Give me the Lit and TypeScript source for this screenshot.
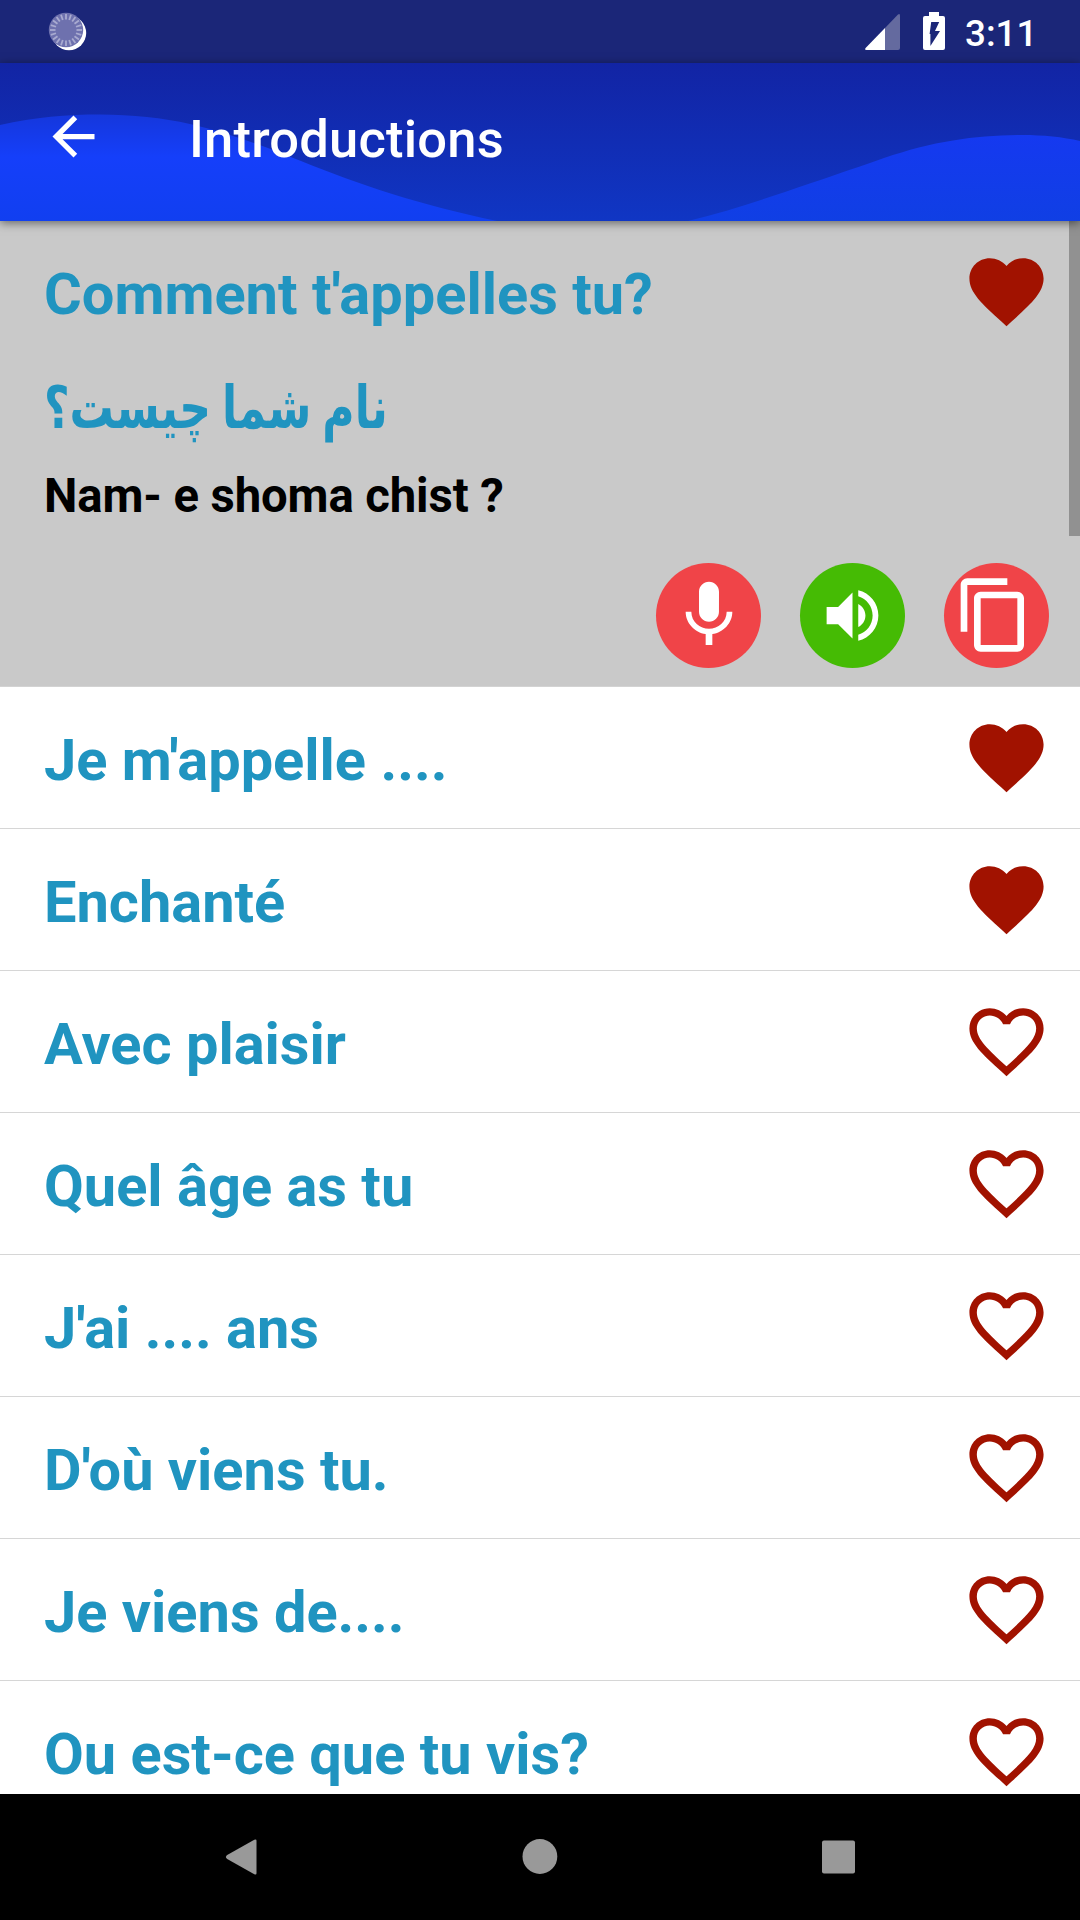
import { LitElement, html, css, svg } from "lit";
import { customElement, property } from "lit/decorators.js";

interface Phrase {
  text: string;
  liked: boolean;
}

const PHRASES: Phrase[] = [
  { text: "Je m'appelle ....", liked: true },
  { text: "Enchanté", liked: true },
  { text: "Avec plaisir", liked: false },
  { text: "Quel âge as tu", liked: false },
  { text: "J'ai .... ans", liked: false },
  { text: "D'où viens tu.", liked: false },
  { text: "Je viens de....", liked: false },
  { text: "Ou est-ce que tu vis?", liked: false },
];

const HEART =
  "M12 21.35l-1.45-1.32C5.4 15.36 2 12.28 2 8.5 2 5.42 4.42 3 7.5 3c1.74 0 3.41.81 4.5 2.09C13.09 3.81 14.76 3 16.5 3 19.58 3 22 5.42 22 8.5c0 3.78-3.4 6.86-8.55 11.54L12 21.35z";
const HEART_HOLE =
  "M12.1 18.6l-.1.1-.1-.1C7.14 14.24 4 11.39 4 8.5 4 6.5 5.5 5 7.5 5c1.54 0 3.04.99 3.57 2.36h1.87C13.46 5.99 14.96 5 16.5 5c2 0 3.5 1.5 3.5 3.5 0 2.89-3.14 5.74-7.9 10.1z";

@customElement("heart-icon")
export class HeartIcon extends LitElement {
  @property({ type: Boolean }) filled = false;

  static styles = css`
    :host { display: block; flex: none; width: 89px; height: 89px; }
    .heart { display: block; width: 89px; height: 89px; fill: #a11200; }
  `;

  render() {
    return html`<svg class="heart" viewBox="0 0 24 24">
      <path fill-rule="evenodd" d=${this.filled ? HEART : HEART + HEART_HOLE}></path>
    </svg>`;
  }
}

@customElement("status-bar")
export class StatusBar extends LitElement {
  static styles = css`
    :host {
      display: flex; align-items: flex-start; height: 63px; box-sizing: border-box;
      padding: 0 44px 0 48px; background: #1b2678; color: #fff;
      font-family: Roboto, sans-serif;
    }
    .sync { width: 40px; height: 40px; margin-top: 12px; }
    .signal { width: 35px; height: 36px; margin: 14px 0 0 auto; }
    .battery { width: 22px; height: 38px; margin: 12px 0 0 23px; }
    .time {
      margin-left: 20px; margin-top: 12px; font-size: 36.75px; line-height: 43px;
      font-weight: 500; width: 71px; white-space: nowrap;
    }
  `;

  render() {
    const ticks = Array.from({ length: 20 }, (_, i) => i * 18);
    return html`
      <svg class="sync" viewBox="0 0 40 40">
        <circle cx="21" cy="21" r="17.2" fill="#fff"></circle>
        <circle cx="18" cy="18" r="17.2" fill="#6e71ae"></circle>
        ${ticks.map(
          (a) => svg`<line x1="18" y1="2" x2="18" y2="7.5" stroke="#a9abd0" stroke-width="1.8" transform="rotate(${a} 18 18)"></line>`
        )}
      </svg>
      <svg class="signal" viewBox="0 0 35 36">
        <path d="M33 .6Q35-.8 35 1.6V34q0 2-2 2H20V14z" fill="#646a9f"></path>
        <path d="M20 14V36H1.6Q-.8 36 .6 34z" fill="#fff"></path>
      </svg>
      <svg class="battery" viewBox="0 0 22 38">
        <path d="M6 0h10v4h4q2 0 2 2v30q0 2-2 2H2q-2 0-2-2V6q0-2 2-2h4z" fill="#fff"></path>
        <path d="M8.200 10h8l-4.200 9H17L7.400 34V22H6.600z" fill="#1b2678"></path>
      </svg>
      <span class="time">3:11</span>
    `;
  }
}

@customElement("title-bar")
export class TitleBar extends LitElement {
  static styles = css`
    :host {
      display: grid; height: 158px; position: relative; z-index: 1;
      box-shadow: 0 2px 9px rgba(0, 0, 0, 0.5); font-family: Roboto, sans-serif;
    }
    .waves, .content { grid-area: 1 / 1; }
    .waves { display: block; width: 1080px; height: 158px; }
    .content { display: flex; align-items: center; padding: 0 42px; color: #fff; }
    .back { width: 63px; height: 63px; margin-top: -11px; fill: #fff; }
    .title { margin: -6px 0 0 84px; font-size: 52.5px; line-height: 62px; font-weight: 500; letter-spacing: 0.2px; }
  `;

  render() {
    return html`
      <svg class="waves" viewBox="0 63 1080 158" preserveAspectRatio="none">
        <defs>
          <linearGradient id="sky" x1="0" y1="0" x2="0" y2="1">
            <stop offset="0" stop-color="#1224a4"></stop>
            <stop offset="1" stop-color="#1036c4"></stop>
          </linearGradient>
          <linearGradient id="left" x1="0" y1="0" x2="0" y2="1">
            <stop offset="0" stop-color="#1537dc"></stop>
            <stop offset=".4" stop-color="#153ffa"></stop>
            <stop offset="1" stop-color="#113ff0"></stop>
          </linearGradient>
          <linearGradient id="right" x1="0" y1="0" x2="0" y2="1">
            <stop offset="0" stop-color="#1539f0"></stop>
            <stop offset="1" stop-color="#103fe4"></stop>
          </linearGradient>
        </defs>
        <rect x="0" y="63" width="1080" height="158" fill="url(#sky)"></rect>
        <path d="M0 125C35 117 67 114.500 100 114.500C132 114.500 163 118 190 124C230 133 266 147 301 161C360 185 420 205 497 221H0z" fill="url(#left)"></path>
        <path d="M688 221C722 213 752 203 785 192C820 180 850 170 884 158C908 150 930 144 953 140.500C976 136.500 998 135 1022 135C1043 135 1063 137 1080 141V221z" fill="url(#right)"></path>
      </svg>
      <div class="content">
        <svg class="back" viewBox="0 0 24 24">
          <path d="M20 11H7.83l5.590-5.590L12 4l-8 8 8 8 1.410-1.410L7.830 13H20v-2z"></path>
        </svg>
        <span class="title">Introductions</span>
      </div>
    `;
  }
}

@customElement("phrase-card")
export class PhraseCard extends LitElement {
  static styles = css`
    :host {
      display: flex; flex-direction: column; height: 466px; box-sizing: border-box;
      background: #c9c9c9; border-bottom: 1px solid #d3d3d3; color: #2094c0;
      font-family: Roboto, "DejaVu Sans", sans-serif; font-weight: 700;
    }
    .head { display: flex; justify-content: space-between; align-items: center; height: 141px; padding: 0 29px 0 44px; }
    .phrase { font-size: 57.750px; line-height: 68px; margin-top: 4px; white-space: nowrap; }
    .persian {
      align-self: flex-start; margin: 4px 0 0 44px; height: 84px; line-height: 84px;
      font-size: 50px; white-space: nowrap; transform: scale(0.882, 1.18); transform-origin: 0 50%;
    }
    .latin { margin: 18px 0 0 44px; font-size: 47.250px; line-height: 56px; color: #000; white-space: nowrap; letter-spacing: -0.1px; }
    .actions { display: flex; justify-content: flex-end; gap: 39px; padding-right: 31px; margin-top: 39px; }
    .action { display: flex; align-items: center; justify-content: center; width: 105px; height: 105px; border-radius: 50%; background: #f04448; }
    .action.listen { background: #45bb04; }
    .icon { width: 80px; height: 80px; margin-bottom: 1px; fill: #fff; }
    .listen .icon { width: 69px; height: 69px; margin-bottom: 0; }
    .copy .icon { margin-right: 5px; }
  `;

  render() {
    return html`
      <div class="head">
        <span class="phrase">Comment t'appelles tu?</span>
        <heart-icon filled></heart-icon>
      </div>
      <div class="persian" dir="rtl" lang="fa">نام شما چیست؟</div>
      <div class="latin">Nam- e shoma chist ?</div>
      <div class="actions">
        <div class="action">
          <svg class="icon" viewBox="0 0 24 24"><path d="M12 14c1.660 0 2.990-1.340 2.990-3L15 5c0-1.660-1.340-3-3-3S9 3.340 9 5v6c0 1.660 1.340 3 3 3zm5.300-3c0 3-2.540 5.100-5.300 5.100S6.700 14 6.700 11H5c0 3.410 2.720 6.230 6 6.720V21h2v-3.280c3.280-.480 6-3.300 6-6.720h-1.700z"></path></svg>
        </div>
        <div class="action listen">
          <svg class="icon" viewBox="0 0 24 24"><path d="M3 9v6h4l5 5V4L7 9H3zm13.500 3c0-1.770-1.020-3.290-2.500-4.030v8.050c1.480-.730 2.500-2.250 2.500-4.020zM14 3.230v2.060c2.890.860 5 3.540 5 6.710s-2.110 5.850-5 6.710v2.060c4.010-.910 7-4.490 7-8.770s-2.990-7.860-7-8.770z"></path></svg>
        </div>
        <div class="action copy">
          <svg class="icon" viewBox="0 0 24 24"><path d="M16 1H4c-1.100 0-2 .900-2 2v14h2V3h12V1zm3 4H8c-1.100 0-2 .900-2 2v14c0 1.100.900 2 2 2h11c1.100 0 2-.900 2-2V7c0-1.100-.900-2-2-2zm0 16H8V7h11v14z"></path></svg>
        </div>
      </div>
    `;
  }
}

@customElement("nav-bar")
export class NavBar extends LitElement {
  static styles = css`
    :host { display: flex; align-items: center; justify-content: space-between; height: 126px; box-sizing: border-box; padding: 0 220px 0 219px; background: #000; }
    .key { width: 42px; height: 42px; fill: #999; }
  `;

  render() {
    return html`
      <svg class="key" viewBox="0 0 42 42"><path d="M35.300 3.800q2.200-1.200 2.200 1V37.200q0 2.200-2.200 1L8.200 23q-2.600-2 0-4z"></path></svg>
      <svg class="key" viewBox="0 0 42 42"><circle cx="20.900" cy="20.500" r="17.400"></circle></svg>
      <svg class="key" viewBox="0 0 42 42"><rect x="4" y="4.500" width="33" height="33" rx="2"></rect></svg>
    `;
  }
}

@customElement("app-root")
export class AppRoot extends LitElement {
  static styles = css`
    :host { display: flex; flex-direction: column; width: 1080px; height: 1920px; overflow: hidden; background: #fff; }
    .list { flex: 1; min-height: 0; overflow: hidden; position: relative; background: #fff; }
    .row {
      display: flex; align-items: center; justify-content: space-between; height: 142px; box-sizing: border-box;
      padding: 0 29px 0 44px; border-bottom: 1px solid #d6d6d6;
      font: 700 57.750px/68px Roboto, sans-serif; color: #2094c0;
    }
    .label { margin-top: 4px; white-space: nowrap; }
    .scrollbar { position: absolute; top: 0; right: 0; width: 11px; height: 315px; background: #919191; }
  `;

  render() {
    return html`
      <status-bar></status-bar>
      <title-bar></title-bar>
      <div class="list">
        <phrase-card></phrase-card>
        ${PHRASES.map(
          (p) => html`<div class="row">
            <span class="label">${p.text}</span>
            <heart-icon ?filled=${p.liked}></heart-icon>
          </div>`
        )}
        <div class="scrollbar"></div>
      </div>
      <nav-bar></nav-bar>
    `;
  }
}
